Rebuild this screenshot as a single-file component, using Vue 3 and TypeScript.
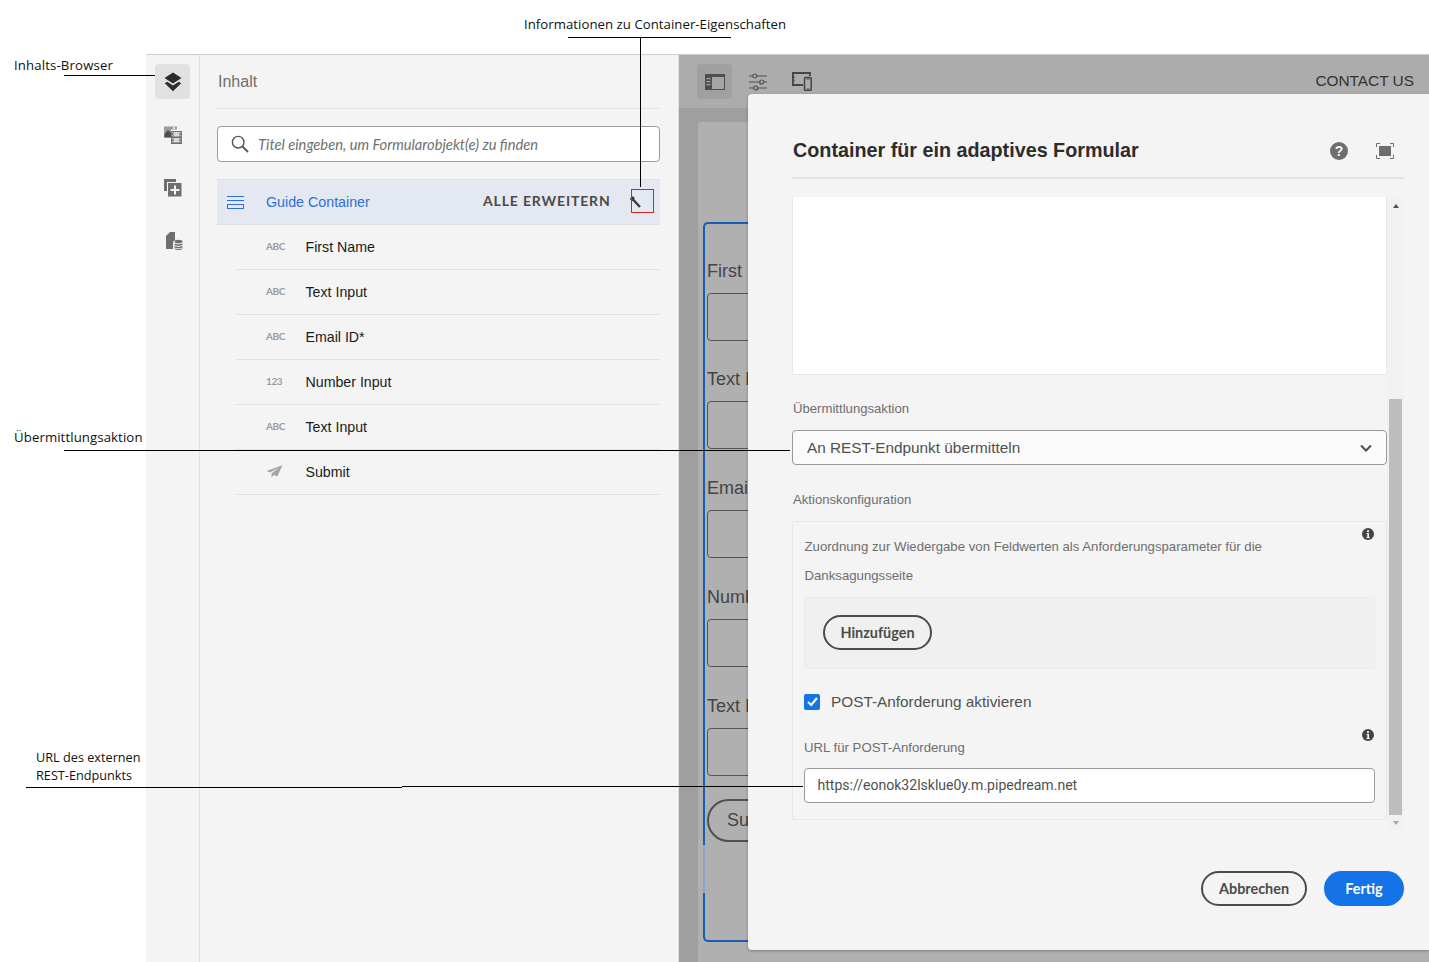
<script setup lang="ts">
interface Row { kind: string; label: string }
const rows: Row[] = [
  { kind: 'ABC', label: 'First Name' },
  { kind: 'ABC', label: 'Text Input' },
  { kind: 'ABC', label: 'Email ID*' },
  { kind: '123', label: 'Number Input' },
  { kind: 'ABC', label: 'Text Input' },
  { kind: 'send', label: 'Submit' },
]
const fields: string[] = ['First Name', 'Text Input', 'Email ID', 'Number Input', 'Text Input']
</script>

<template>
  <div class="root">
    <div class="app">
      <nav class="rail">
        <div class="rail-btn active">
          <svg width="18" height="20" viewBox="0 0 18 20"><path d="M9 0.5 17.500 6 9 11.500 0.500 6Z" fill="#2c2c2c"/><path d="M0.800 11.200 3.200 9.800 9 13.600 14.800 9.800 17.200 11.200 9 19.200Z" fill="#2c2c2c"/></svg>
        </div>
        <div class="rail-btn">
          <svg width="20" height="20" viewBox="0 0 20 20" fill="#6e6e6e"><path d="M1 1.500h13v3H8v8H1z" fill="#9a9a9a"/><path d="M1.500 12.500V9L5 5l3 3v4.500z" fill="#4e4e4e"/><circle cx="11" cy="3" r="1" fill="#f4f4f4"/><path d="M8 6h11v13H8z"/><path d="M10.500 7h6v4.500h-6zM10.500 13h6v4.500h-6zM8.800 7h1v1.200h-1zM8.800 10h1v1.200h-1zM8.800 13h1v1.200h-1zM8.800 16h1v1.200h-1zM17.200 7h1v1.200h-1zM17.200 10h1v1.200h-1zM17.200 13h1v1.200h-1zM17.200 16h1v1.200h-1z" fill="#d8d8d8"/></svg>
        </div>
        <div class="rail-btn">
          <svg width="19" height="19" viewBox="0 0 19 19"><path d="M1 1h12v3H4v9H1z" fill="#6e6e6e"/><path d="M5 5h13.500v13.500H5z" fill="#6e6e6e"/><path d="M11 7.500h2V11h3.500v2H13v3.500h-2V13H7.500v-2H11z" fill="#f4f4f4"/></svg>
        </div>
        <div class="rail-btn">
          <svg class="nudge" width="18" height="20" viewBox="0 0 18 20" fill="#6e6e6e"><path d="M5 1h5v8.500c-1.500.4-2 1.200-2 2.200V18H1V5z"/><ellipse cx="13.500" cy="10.500" rx="4" ry="1.800"/><path d="M9.500 12.600c1 1 7 1 8 0v1.400c-1 1.100-7 1.100-8 0zM9.500 15c1 1 7 1 8 0v1.400c-1 1.100-7 1.100-8 0zM9.500 17.300c1 1 7 1 8 0v.5c-1 1.600-7 1.600-8 0z"/></svg>
        </div>
      </nav>

      <section class="panel">
        <header class="panel-head">Inhalt</header>
        <div class="search">
          <svg width="18" height="18" viewBox="0 0 18 18" fill="none" stroke="#555" stroke-width="1.400"><circle cx="7.200" cy="7.200" r="5.800"/><path d="M11.500 11.500 17 17" stroke-width="1.800"/></svg>
          <span>Titel eingeben, um Formularobjekt(e) zu finden</span>
        </div>
        <div class="guide">
          <svg class="guide-icon" width="17" height="14" viewBox="0 0 17 14" fill="none" stroke="#2f6fd6" stroke-width="1"><path d="M0 1.500h17M0 5.500h17"/><rect x="0.500" y="9.500" width="16" height="4"/></svg>
          <span class="guide-name">Guide Container</span>
          <span class="expand">ALLE ERWEITERN</span>
          <svg class="wrench" width="11" height="12" viewBox="0 0 11 12"><path d="M0 2.400 2 .3l1.800.5.9 1.500-.3 1 6.400 6.900-1.700 1.600L2.800 4.900l-1 .2L.4 3.900z" fill="#3c3c3c"/></svg>
        </div>
        <ul class="tree">
          <li v-for="(row, i) in rows" :key="i" class="tree-row">
            <span class="kind">
              <svg v-if="row.kind === 'send'" width="17" height="13" viewBox="0 0 17 13" fill="#a4a4a4"><path d="M16.500 0.300 0.500 6 4 7.600 13 2.500 5.500 8.600v3.900l2.400-2.600 3.400 1.600z"/></svg>
              <template v-else>{{ row.kind }}</template>
            </span>
            <span class="row-label">{{ row.label }}</span>
          </li>
        </ul>
      </section>

      <main class="main">
        <div class="toolbar">
          <div class="tool active">
            <svg width="20" height="16" viewBox="0 0 20 16"><path d="M0 0h20v16H0z" fill="#4e4e4e"/><path d="M7 3h12v12H7z" fill="#a4a4a4"/><path d="M1.500 4h4v1.200h-4zM1.500 7h4v1.200h-4zM1.500 10h4v1.200h-4z" fill="#a4a4a4"/></svg>
          </div>
          <div class="tool">
            <svg width="18" height="18" viewBox="0 0 18 18" fill="none" stroke="#505050" stroke-width="1.200"><path d="M0 3h3.500M8 3h10M0 9h10.500M15 9h3M0 15h4.500M9 15h9"/><circle cx="5.700" cy="3" r="2"/><circle cx="12.700" cy="9" r="2"/><circle cx="6.700" cy="15" r="2"/></svg>
          </div>
          <div class="tool">
            <svg width="20" height="19" viewBox="0 0 20 19" fill="none" stroke="#454545" stroke-width="1.800"><path d="M11 13H.9V1h17v3"/><path d="M1 5h1.500M1 8.500h1.500" stroke-width="2"/><rect x="12.500" y="5.500" width="6.700" height="13" rx="1" stroke-width="1.500"/><path d="M14.500 7h3M14.500 17h3" stroke-width="1"/></svg>
          </div>
          <span class="contact">CONTACT US</span>
        </div>
        <div class="canvas">
          <div class="sheet">
            <div class="form-box">
              <div v-for="(f, i) in fields" :key="i" class="form-field">
                <label>{{ f }}</label>
                <div class="form-input"></div>
              </div>
              <div class="form-submit">Submit</div>
              <i class="form-glint"></i>
            </div>
          </div>
        </div>
      </main>
    </div>

    <div class="dialog">
      <header class="dlg-head">
        <h1>Container für ein adaptives Formular</h1>
        <svg class="help" width="18" height="18" viewBox="0 0 18 18"><circle cx="9" cy="9" r="9" fill="#6e6e6e"/><text x="9" y="14" text-anchor="middle" class="glyph" fill="#f4f4f4">?</text></svg>
        <svg class="full" width="18" height="16" viewBox="0 0 18 16" fill="none" stroke="#6e6e6e"><path d="M.5 4V.5H4M14 .5h3.500V4M.5 12v3.500H4M14 15.500h3.500V12"/><rect x="3" y="3" width="12" height="10" fill="#6e6e6e" stroke="none"/></svg>
      </header>
      <div class="dlg-scroll">
        <div class="dlg-content">
          <div class="blank"></div>
          <div class="field-label first">Übermittlungsaktion</div>
          <div class="select">
            <span>An REST-Endpunkt übermitteln</span>
            <svg width="12" height="8" viewBox="0 0 12 8" fill="none" stroke="#505050" stroke-width="2"><path d="M1 1.500 6 6.500l5-5"/></svg>
          </div>
          <div class="field-label second">Aktionskonfiguration</div>
          <div class="group">
            <svg class="info info-a" width="12" height="12" viewBox="0 0 12 12"><circle cx="6" cy="6" r="6" fill="#444"/><path d="M5 2.200h2v1.800H5zM4.600 5h2.400v3.900h.8V10H4.400V8.900h.9V6.100h-.7z" fill="#f4f4f4"/></svg>
            <p class="desc">Zuordnung zur Wiedergabe von Feldwerten als Anforderungsparameter für die Danksagungsseite</p>
            <div class="inner">
              <button class="btn outline add">Hinzufügen</button>
            </div>
            <div class="check-row">
              <span class="check">
                <svg width="11" height="10" viewBox="0 0 11 10" fill="none" stroke="#fff" stroke-width="2.200"><path d="M1 5 4.200 8 10 1"/></svg>
              </span>
              <span>POST-Anforderung aktivieren</span>
            </div>
            <div class="url-label">URL für POST-Anforderung</div>
            <svg class="info info-b" width="12" height="12" viewBox="0 0 12 12"><circle cx="6" cy="6" r="6" fill="#444"/><path d="M5 2.200h2v1.800H5zM4.600 5h2.400v3.900h.8V10H4.400V8.900h.9V6.100h-.7z" fill="#f4f4f4"/></svg>
            <div class="url-input">https://eonok32lsklue0y.m.pipedream.net</div>
          </div>
        </div>
        <div class="scrollbar">
          <i class="arrow up"></i>
          <div class="track"><div class="thumb"></div></div>
          <i class="arrow down"></i>
        </div>
      </div>
      <footer class="dlg-foot">
        <button class="btn outline">Abbrechen</button>
        <button class="btn primary">Fertig</button>
      </footer>
    </div>

    <div class="note note-browser">Inhalts-Browser</div>
    <div class="note note-info">Informationen zu Container-Eigenschaften</div>
    <div class="note note-action">Übermittlungsaktion</div>
    <div class="note note-url">URL des externen<br />REST-Endpunkts</div>
    <i class="ln" style="left:64px;top:75px;width:91px;height:1px"></i>
    <i class="ln" style="left:568px;top:37px;width:163px;height:1px"></i>
    <i class="ln" style="left:640px;top:37px;width:1px;height:150px"></i>
    <i class="ln" style="left:64px;top:450px;width:726px;height:1px"></i>
    <i class="ln" style="left:26px;top:787px;width:376px;height:1px"></i>
    <i class="ln" style="left:402px;top:786px;width:401px;height:1px"></i>
    <div class="redbox"></div>
  </div>
</template>

<style>
html, body { margin: 0; background: #fff; overflow: hidden; }
</style>

<style scoped>
* { box-sizing: border-box; }
.root { position: relative; width: 1429px; height: 962px; overflow: hidden; background: #fff; font-family: "Liberation Sans", Arial, sans-serif; }
.app { position: absolute; left: 146px; top: 54px; right: 0; bottom: 0; display: flex; border-top: 1px solid #cfcfcf; }

.rail { width: 54px; flex: none; background: #f4f4f4; border-right: 1px solid #e0e0e0; padding: 9px 0 0 9px; display: flex; flex-direction: column; gap: 18px; }
.rail-btn { width: 35px; height: 35px; border-radius: 4px; display: flex; align-items: center; justify-content: center; }
.rail-btn.active { background: #e1e1e1; }
.nudge { margin-left: 2px; }

.panel { width: 478px; flex: none; background: #f4f4f4; padding: 0 18px 0 17px; }
.panel-head { height: 54px; line-height: 54px; padding-left: 1px; border-bottom: 1px solid #e3e3e3; font-size: 16px; color: #6e6e6e; }
.search { margin-top: 17px; height: 36px; border: 1px solid #9a9a9a; border-radius: 4px; background: #fff; display: flex; align-items: center; padding: 0 0 1px 13px; gap: 9px; font: italic 14.7px Lato, sans-serif; color: #707070; }
.guide { margin-top: 17px; height: 46px; background: #e4e8f0; border-top: 1px solid #e0e0e0; border-bottom: 1px solid #e0e0e0; display: flex; align-items: center; padding-left: 10px; }
.guide-icon { flex: none; }
.guide-name { margin-left: 22px; width: 217px; font-size: 14.25px; color: #2f6fd6; }
.expand { width: 147px; margin-bottom: 3px; font: bold 14px Lato, sans-serif; letter-spacing: .85px; color: #4b4b4b; white-space: nowrap; }
.wrench { flex: none; }
.tree { list-style: none; margin: 0 0 0 18px; padding: 0; }
.tree-row { height: 45px; border-bottom: 1px solid #e3e3e3; display: flex; align-items: center; padding-left: 31px; }
.kind { width: 39.5px; flex: none; margin-bottom: 2px; font: bold 10px Lato, sans-serif; letter-spacing: -.4px; color: #9c9c9c; display: flex; align-items: center; }
.row-label { font-size: 14.2px; color: #1a1a1a; }

.main { flex: 1; min-width: 0; background: #9f9f9f; border-left: 1px solid #e0e0e0; }
.toolbar { height: 53px; background: #acacac; display: flex; align-items: flex-start; padding: 9px 15px 0 18px; gap: 8.5px; }
.tool { width: 35px; height: 35px; border-radius: 4px; display: flex; align-items: center; justify-content: center; }
.tool.active { background: #a0a0a0; }
.contact { margin-left: auto; font-size: 15.4px; line-height: 34px; color: #333; }
.canvas { padding: 14px 0 0 19px; height: 854px; }
.sheet { height: 840px; background: #b0b0b0; border-radius: 3px 3px 0 0; padding: 100px 0 0 5px; }
.form-box { position: relative; height: 720px; border: 2px solid #1a5db4; border-radius: 5px 0 0 5px; border-right: 0; padding: 34.6px 0 0 2px; font-size: 18px; color: #444; }
.form-field { height: 108.75px; }
.form-field label { display: block; height: 34px; line-height: 24px; }
.form-input { height: 48px; border: 1px solid #555; border-radius: 4px; }
.form-submit { width: 200px; height: 43px; margin-top: -3px; border: 2px solid #505050; border-radius: 22px; padding-left: 18px; line-height: 38px; }
.form-glint { position: absolute; left: -2px; top: 621px; width: 2px; height: 48px; background: #8fa5c5; }

.dialog { position: absolute; left: 748px; top: 94px; width: 681px; height: 856px; background: #f4f4f4; border-radius: 4px 0 0 4px; box-shadow: 0 1px 3px rgba(0,0,0,.3); padding: 0 25px 0 44px; }
.dlg-head { height: 85px; border-bottom: 2px solid #e2e2e2; display: flex; align-items: center; padding: 30px 10px 0 1px; }
.dlg-head h1 { margin: 0; flex: 1; font-size: 19.75px; font-weight: 700; color: #2c2c2c; }
.help { margin-right: 28px; }
.full { flex: none; }
.glyph { font: bold 14px "Liberation Sans", sans-serif; }
.dlg-scroll { margin-top: 18px; height: 633px; display: flex; }
.dlg-content { width: 595px; flex: none; }
.blank { height: 178px; background: #fff; border: 1px solid #e8e8e8; border-top: 0; }
.field-label { padding-left: 1px; font-size: 13.15px; color: #6e6e6e; line-height: 14px; }
.field-label.first { margin-top: 27px; }
.select { margin-top: 14px; height: 35px; border: 1px solid #9a9a9a; border-radius: 4px; background: #fafafa; display: flex; align-items: center; justify-content: space-between; padding: 0 14px; font-size: 15.35px; color: #505050; }
.select + .field-label { margin-top: 28px; }
.group { position: relative; margin-top: 14px; height: 299px; border: 1px solid #e8e8e8; border-radius: 2px; padding: 10px 11px 0; }
.info { position: absolute; }
.info-a { right: 12px; top: 6px; }
.info-b { right: 12px; top: 207px; }
.desc { margin: 0; width: 500px; padding-left: .5px; font-size: 13.2px; line-height: 29px; color: #6e6e6e; }
.inner { margin-top: 7px; height: 72px; background: #f0f0f0; border: 1px solid #ebebeb; border-radius: 3px; padding: 17px 18px; }
.btn { height: 35px; border-radius: 18px; font: bold 14.4px Lato, sans-serif; padding: 0; background: transparent; }
.outline { border: 2px solid #4b4b4b; color: #4b4b4b; width: 106px; }
.add { width: 109px; }
.primary { background: #1473e6; border: 0; color: #fff; width: 80px; }
.check-row { margin-top: 25px; height: 16px; display: flex; align-items: center; gap: 11px; font-size: 15.35px; color: #505050; }
.check { width: 16px; height: 16px; background: #1473e6; border-radius: 2px; display: flex; align-items: center; justify-content: center; }
.url-label { margin-top: 31px; font-size: 13.2px; line-height: 14px; color: #6e6e6e; }
.url-input { margin-top: 13px; height: 35px; border: 1px solid #9a9a9a; border-radius: 4px; background: #fff; padding-left: 12.5px; font: 14.05px/33px Roboto, sans-serif; color: #505050; }
.scrollbar { flex: none; width: 17px; display: flex; flex-direction: column; align-items: center; background: #f1f1f1; }
.arrow { width: 0; height: 0; border-left: 3.5px solid transparent; border-right: 3.5px solid transparent; flex: none; }
.arrow.up { margin-top: 7px; border-bottom: 4px solid #505050; }
.arrow.down { margin: 6px 0 5px; border-top: 4px solid #a8a8a8; }
.track { flex: 1; width: 100%; display: flex; flex-direction: column; justify-content: flex-end; padding: 0 2px; }
.thumb { height: 416px; background: #bdbdbd; }
.dlg-foot { display: flex; justify-content: flex-end; gap: 17px; margin-top: 41px; }

.note { position: absolute; font: 13.2px/18px "Open Sans", sans-serif; color: #111; white-space: nowrap; }
.note-browser { left: 14px; top: 56px; letter-spacing: .14px; }
.note-info { left: 524px; top: 15px; letter-spacing: .04px; }
.note-action { left: 14px; top: 428px; letter-spacing: .1px; }
.note-url { left: 36px; top: 748px; font-size: 12.7px; }
.ln { position: absolute; background: #000; display: block; }
.redbox { position: absolute; left: 631px; top: 189px; width: 23px; height: 24px; border: 1px solid #e02020; }
</style>
